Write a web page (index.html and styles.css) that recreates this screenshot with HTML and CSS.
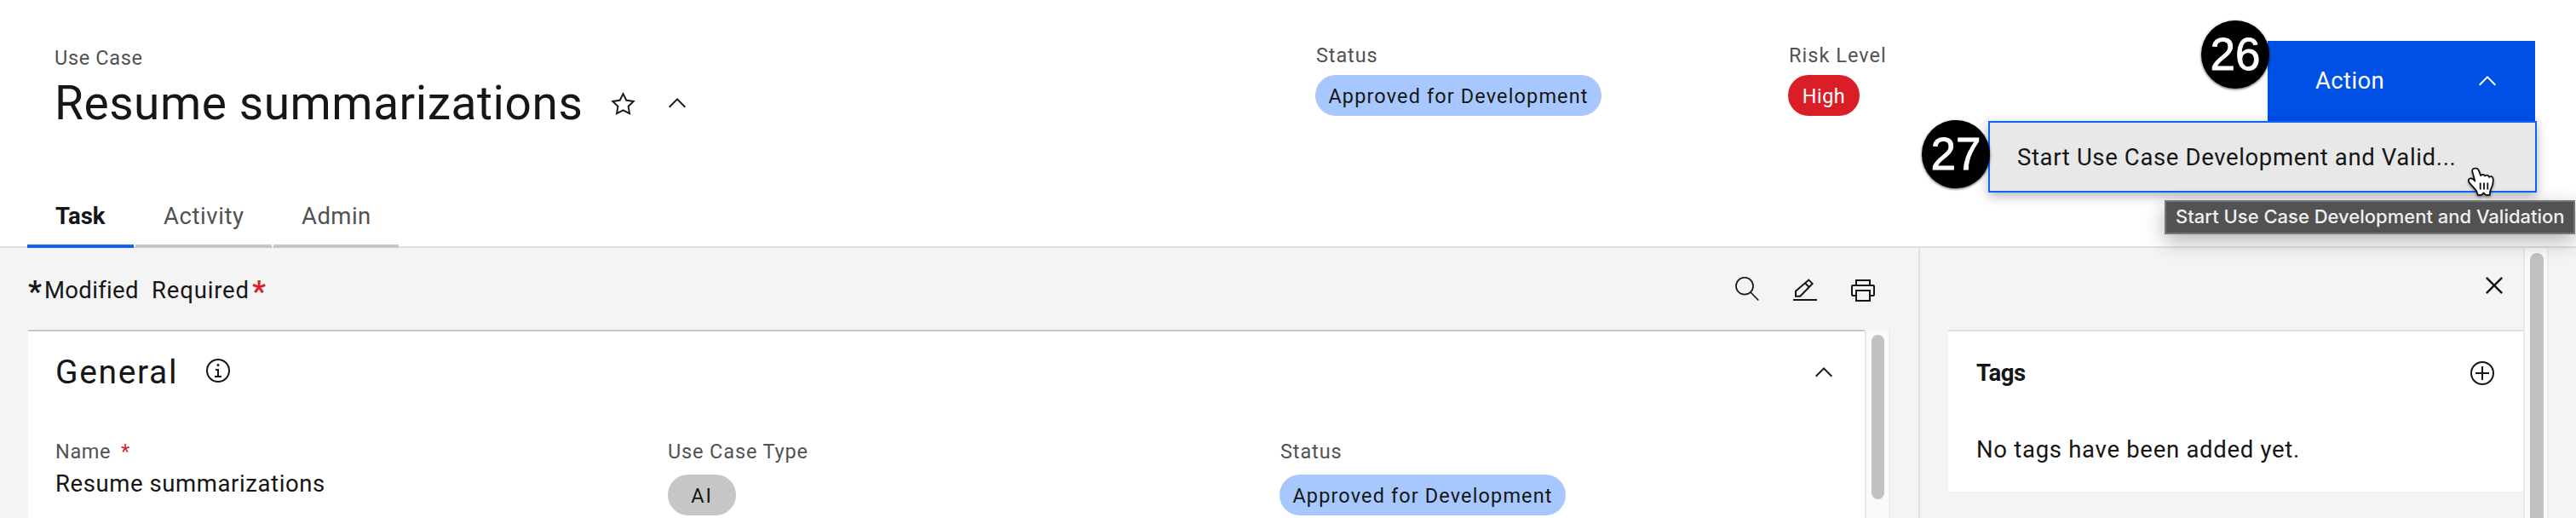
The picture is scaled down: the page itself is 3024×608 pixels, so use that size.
FILE: index.html
```html
<!DOCTYPE html>
<html lang="en">
<head>
<meta charset="utf-8">
<title>Resume summarizations</title>
<link rel="stylesheet" href="styles.css">
</head>
<body>
<div class="page">
  <header class="header">
    <div class="header-top">
      <div class="title-block">
        <div class="label use-case">Use Case</div>
        <div class="title-row">
          <h1 class="title">Resume summarizations</h1>
          <svg class="star" viewBox="0 0 32 32"><path d="M16 6.52l2.76 5.58.46 1 1 .15 6.16.89-4.38 4.3-.75.73.18 1 1.05 6.13-5.51-2.89L16 23l-.93.49-5.51 2.85 1-6.13.18-1-.74-.77-4.42-4.35 6.16-.89 1-.15.46-1L16 6.52M16 2l-4.55 9.22L1.28 12.69l7.36 7.18L6.9 30 16 25.22 25.1 30l-1.74-10.13 7.36-7.17-10.17-1.48L16 2z"/></svg>
          <svg class="icon" viewBox="0 0 32 32"><path d="M16 10l10 10-1.4 1.4-8.6-8.6-8.6 8.6L6 20z"/></svg>
        </div>
      </div>
      <div class="meta">
        <div class="label status">Status</div>
        <span class="pill pill-blue">Approved for Development</span>
      </div>
      <div class="meta">
        <div class="label risk">Risk Level</div>
        <span class="pill pill-red">High</span>
      </div>
      <div class="action-wrap">
        <button class="action"><span>Action</span><svg class="icon" viewBox="0 0 32 32"><path d="M16 10l10 10-1.4 1.4-8.6-8.6-8.6 8.6L6 20z"/></svg></button>
        <div class="menu">Start Use Case Development and Valid...</div>
        <div class="step step-26">26</div>
        <div class="step step-27">27</div>
        <div class="tooltip">Start Use Case Development and Validation</div>
        <svg class="cursor" viewBox="0 0 36 38"><path d="M10 2.7c-2.2 0-3.2 1.8-2.6 4l3 10.800c-1.500-2-3.400-3.500-5.400-3.200-2.300.4-2.700 2.700-1.500 4.600 2.400 3.500 6.200 6.600 8.500 10.100.8 1.300 1.200 3 1.700 4.900h4.300l2.500-2.400 2.700 2.400h4.600c-.2-3 .1-4.600 1.200-6.800 2-3.600 2.800-6.600 2.800-10.100 0-2.700-.5-4.500-2.300-4.800-1.200-.2-2 .2-2.500.7-.5-1.700-1.600-2.300-2.900-2.200-.9.100-1.700.4-2 .9-.6-1.300-1.800-1.800-3-1.700-1 .1-1.800.6-2 1.200l-2.200-6c-.8-1.700-1.700-2.400-2.900-2.400z"/><path d="M16.700 19.500v8M21 19.500v8M25.300 19.500v8"/></svg>
      </div>
    </div>
    <nav class="tabs">
      <a class="tab tab-task">Task</a>
      <a class="tab tab-activity">Activity</a>
      <a class="tab tab-admin">Admin</a>
    </nav>
  </header>

  <div class="content">
    <main class="main">
      <div class="toolbar">
        <div class="legend"><b class="mark">*</b><span class="modified">Modified</span><span class="required">Required</span><b class="mark red">*</b></div>
        <div class="tools">
          <svg class="icon line" viewBox="0 0 32 32"><circle cx="13" cy="10.700" r="10"/><path d="M20 18l9.300 9.500"/></svg>
          <svg class="icon line" viewBox="0 0 32 32"><path class="thick" d="M2 27h28M5 22.700v-5.900L20.300 3.500l4.300 4.400-14.300 14.800zM16 7.300l4.700 4.700"/></svg>
          <svg class="icon" viewBox="0 0 32 32"><path d="M28 9h-3V3H7v6H4a2 2 0 0 0-2 2v10a2 2 0 0 0 2 2h3v6h18v-6h3a2 2 0 0 0 2-2V11a2 2 0 0 0-2-2zM9 5h14v4H9zm14 22H9V17h14zm5-6h-3v-6H7v6H4V11h24z"/></svg>
        </div>
      </div>
      <div class="scroll-area">
        <section class="general">
          <div class="section-head">
            <h2 class="section-title">General</h2>
            <svg class="icon info" viewBox="0 0 32 32"><path d="M17 22v-8h-4v2h2v6h-3v2h8v-2zM16 8a1.500 1.500 0 1 0 1.500 1.500A1.500 1.500 0 0 0 16 8z"/><path d="M16 30a14 14 0 1 1 14-14 14 14 0 0 1-14 14zm0-26a12 12 0 1 0 12 12A12 12 0 0 0 16 4z"/></svg>
            <svg class="icon collapse" viewBox="0 0 32 32"><path d="M16 10l10 10-1.400 1.400-8.600-8.600-8.600 8.600L6 20z"/></svg>
          </div>
          <div class="fields">
            <div class="field">
              <div class="label name">Name<span class="req">*</span></div>
              <div class="value">Resume summarizations</div>
            </div>
            <div class="field">
              <div class="label type">Use Case Type</div>
              <span class="pill pill-gray">AI</span>
            </div>
            <div class="field">
              <div class="label status">Status</div>
              <span class="pill pill-blue">Approved for Development</span>
            </div>
          </div>
        </section>
        <div class="scrollbar scrollbar-main"><div class="thumb thumb-main"></div></div>
      </div>
    </main>
    <aside class="side">
      <div class="side-body">
        <div class="side-head">
          <svg class="close" viewBox="0 0 32 32"><path d="M17.400 16L24 9.400 22.600 8 16 14.600 9.400 8 8 9.400l6.600 6.600L8 22.600 9.400 24l6.600-6.600 6.600 6.600 1.400-1.400z"/></svg>
        </div>
        <section class="tags">
          <div class="tags-head">
            <h3 class="tags-title">Tags</h3>
            <svg class="icon" viewBox="0 0 32 32"><path d="M16 4A12 12 0 1 1 4 16 12 12 0 0 1 16 4m0-2a14 14 0 1 0 14 14A14 14 0 0 0 16 2z"/><path d="M24 15h-7V8h-2v7H8v2h7v7h2v-7h7z"/></svg>
          </div>
          <p class="tags-empty">No tags have been added yet.</p>
        </section>
      </div>
      <div class="scrollbar scrollbar-side"><div class="thumb thumb-side"></div></div>
    </aside>
  </div>
</div>
</body>
</html>
```
FILE: styles.css
```css
* { box-sizing: border-box; }
body {
  margin: 0;
  background: #f4f4f4;
  color: #161616;
  font-family: Roboto, "Noto Sans", sans-serif;
  font-size: 27.5px;
  line-height: 36px;
}
h1, h2, h3, p { margin: 0; font-weight: 400; }
svg { display: block; flex: none; fill: currentColor; }
.page { width: 3024px; height: 608px; overflow: hidden; display: flex; flex-direction: column; }
.icon { width: 32px; height: 32px; }
.line { fill: none; stroke: currentColor; stroke-width: 1.7; }
.thick { stroke-width: 2; }

.header { height: 291px; flex: none; background: #fff; border-bottom: 2px solid #e0e0e0; }
.header-top { height: 232px; display: grid; grid-template-columns: 1544px 555px 563px 314px; }
.title-block { padding: 52px 0 0 64px; }
.title-row { display: flex; align-items: center; height: 72px; margin-top: 1px; }
.title { width: 652px; font-size: 55px; line-height: 72px; letter-spacing: .56px; white-space: nowrap; }
.star { width: 31px; height: 31px; margin-right: 32px; }

.label { font-size: 23.5px; line-height: 32px; color: #525252; white-space: nowrap; }
.use-case { letter-spacing: .66px; }
.status { letter-spacing: .89px; padding-left: 1px; }
.risk { letter-spacing: 1.03px; padding-left: 1px; }
.type { letter-spacing: .86px; }
.name { letter-spacing: .62px; }
.req { color: #da1e28; margin-left: 12px; }

.meta { padding-top: 49px; }
.pill {
  display: inline-flex; align-items: center; justify-content: center;
  height: 48px; padding-top: 1px; border-radius: 24px;
  font-size: 23.5px; letter-spacing: 1.12px; white-space: nowrap;
}
.meta .pill { margin-top: 7px; }
.pill-blue { width: 336px; background: #a6c8ff; }
.pill-red { width: 84px; background: #da1e28; color: #fff; letter-spacing: .44px; }
.pill-gray { width: 80px; background: #c6c6c6; letter-spacing: 2px; }

.action-wrap { position: relative; padding-top: 48px; }
.action {
  display: flex; justify-content: space-between; align-items: center;
  width: 314px; height: 94px; padding: 0 40px 0 56px; border: 0;
  background: #0050e6; color: #fff; font: inherit; letter-spacing: .36px;
}
.menu {
  position: absolute; right: -2px; top: 142px; width: 644px; height: 84px;
  padding: 23px 0 0 32px; border: 2px solid #0f62fe; background: #e8e8e8;
  box-shadow: 0 4px 12px rgba(0, 0, 0, .3); letter-spacing: .635px; white-space: nowrap;
}
.step {
  position: absolute; width: 80px; height: 80px; border-radius: 50%;
  background: #000; color: #fff; box-shadow: 0 1px 3px rgba(0, 0, 0, .7);
  font: 53px/80px "Liberation Sans", sans-serif; text-align: center; -webkit-text-stroke: .8px #fff;
}
.step-26 { left: -78px; top: 24px; }
.step-27 { left: -406px; top: 141px; }
.tooltip {
  position: absolute; left: -121px; top: 235px; width: 482px; height: 40px;
  padding-left: 11px; border: 2px solid #757575; background: #525252; color: #f0f0f0;
  box-shadow: 0 8px 24px rgba(0, 0, 0, .3);
  font: 500 22px/35px Inter, sans-serif; white-space: nowrap;
}
.cursor {
  position: absolute; left: 233px; top: 195px; width: 36px; height: 38px;
  fill: #fff; stroke: #111; stroke-width: 1.8; stroke-linejoin: round;
  filter: drop-shadow(0 2px 1.5px rgba(0, 0, 0, .4));
}

.tabs { display: flex; gap: 2px; height: 59px; padding-left: 32px; }
.tab { height: 59px; padding: 4px 0 0 33px; border-bottom: 4px solid #c6c6c6; color: #525252; }
.tab-task { width: 125px; border-color: #0f62fe; color: #161616; font-weight: 700; }
.tab-activity { width: 160px; letter-spacing: .57px; }
.tab-admin { width: 147px; letter-spacing: .44px; }

.content { flex: 1; display: flex; min-height: 0; }
.main { width: 2254px; border-right: 2px solid #e0e0e0; display: flex; flex-direction: column; }
.toolbar { height: 96px; display: flex; justify-content: space-between; align-items: center; padding: 4px 49px 0 33px; flex: none; }
.legend { display: flex; align-items: center; height: 36px; }
.mark { width: 19px; font-size: 35px; line-height: 36px; padding-top: 4px; }
.modified { width: 126px; letter-spacing: .33px; }
.required { width: 118px; letter-spacing: .84px; }
.red { color: #da1e28; }
.tools { display: flex; gap: 36px; }
.scroll-area { flex: 1; display: flex; margin-left: 33px; min-height: 0; overflow: hidden; }
.general { width: 2156px; background: #fff; border-top: 2px solid #c6c6c6; padding: 22px 32px 0; }
.section-head { display: flex; align-items: center; height: 52px; }
.section-title { width: 175px; font-size: 39px; line-height: 52px; letter-spacing: 1.64px; }
.info { position: relative; top: -2px; }
.collapse { margin-left: auto; }
.fields { display: grid; grid-template-columns: 719px 718px 1fr; margin-top: 51px; }
.value { margin-top: 4px; letter-spacing: .595px; }
.field .pill { margin-top: 11px; }

.scrollbar { flex: none; background: #fafafa; border-left: 2px solid #e8e8e8; border-right: 2px solid #ededed; padding-left: 6px; }
.scrollbar-main { width: 30px; padding-top: 6px; }
.scrollbar-side { width: 30px; padding-top: 6px; }
.thumb { width: 16px; border-radius: 8px; background: #c1c1c1; }
.thumb-main { width: 15px; height: 193px; }
.thumb-side { height: 400px; }

.side { display: flex; width: 738px; overflow: hidden; }
.side-body { width: 708px; padding-left: 33px; }
.side-head { height: 96px; display: flex; justify-content: flex-end; padding: 24px 14px 0 0; }
.close { width: 40px; height: 40px; }
.tags { height: 190px; background: #fff; border-top: 2px solid #e0e0e0; padding: 31px 32px 0 33px; }
.tags-head { display: flex; justify-content: space-between; align-items: center; height: 36px; }
.tags-title { font-size: 27.5px; font-weight: 700; letter-spacing: -.48px; }
.tags-empty { margin-top: 54px; letter-spacing: .71px; }
```
